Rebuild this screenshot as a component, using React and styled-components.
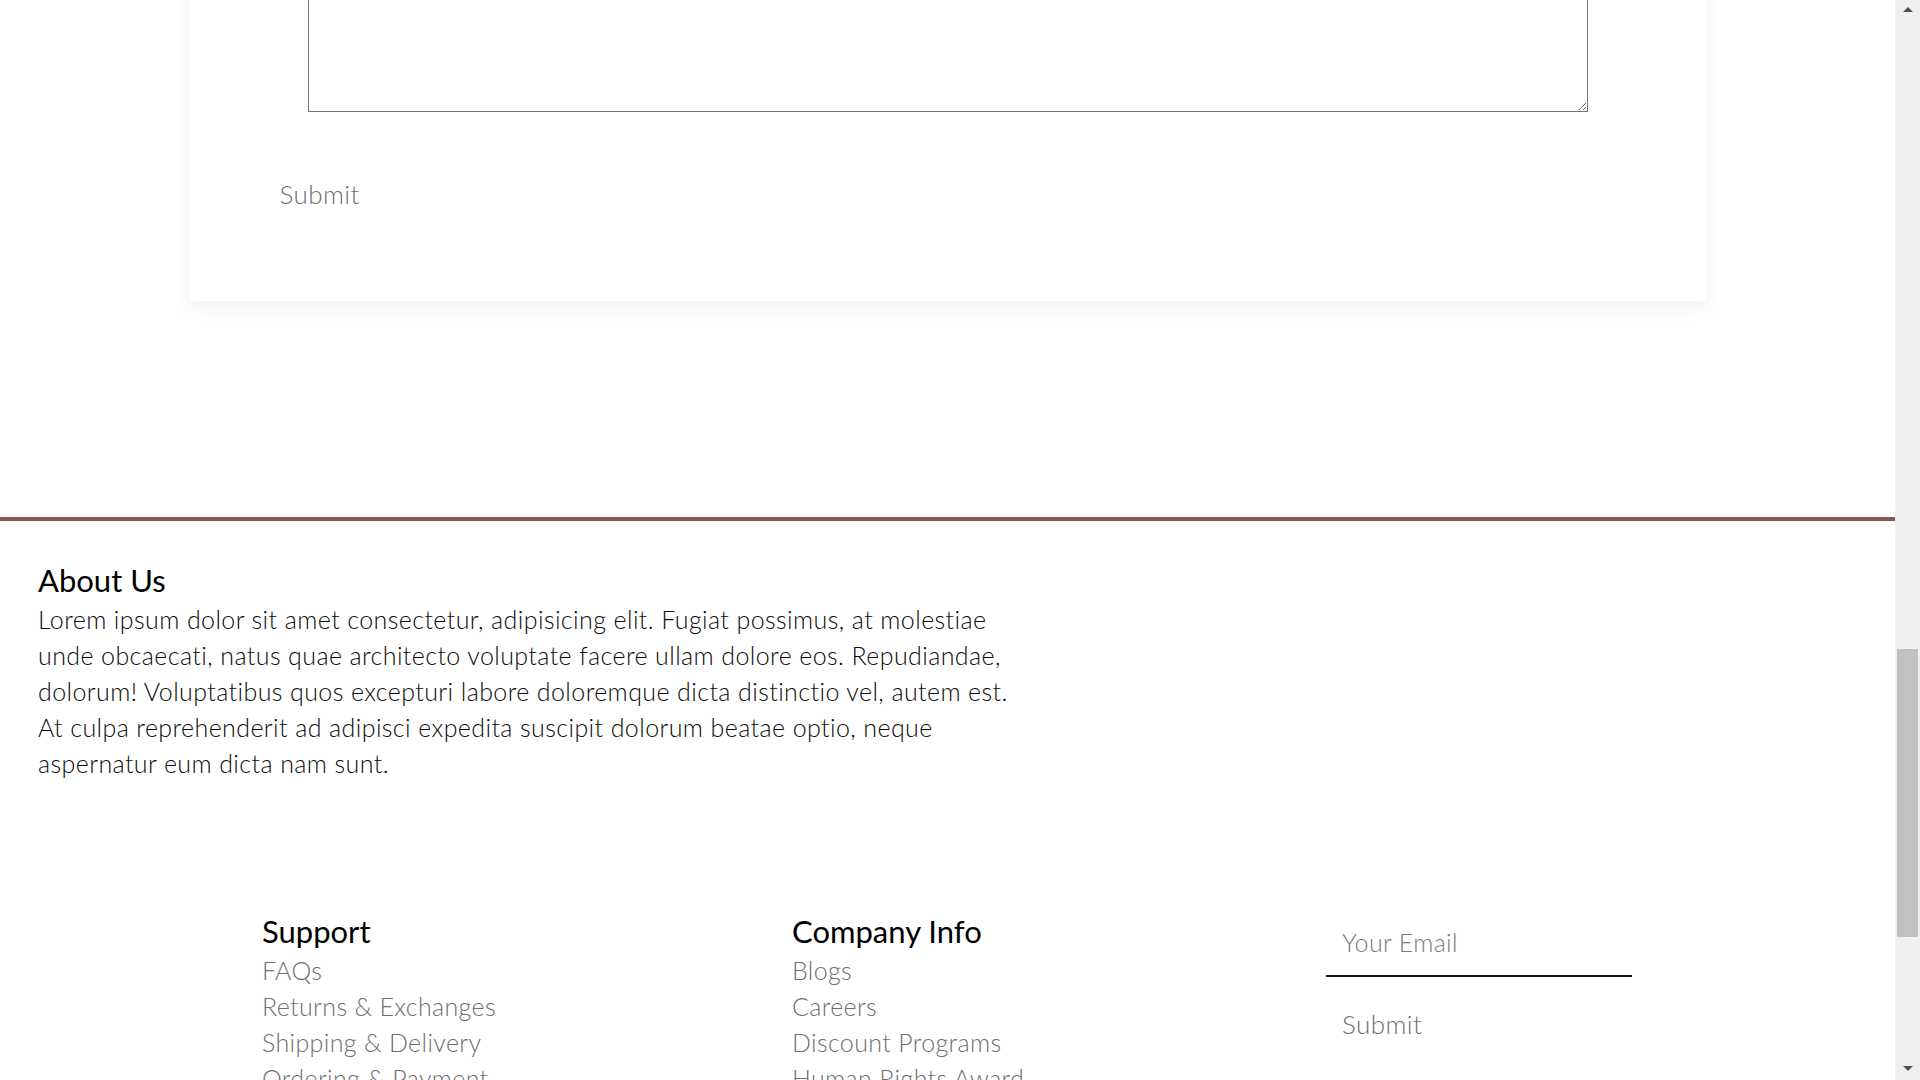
import React from "react";
import styled, { createGlobalStyle } from "styled-components";

const GlobalStyle = createGlobalStyle`
    html, body {
        margin: 0;
        height: 1080px;
        overflow: hidden;
        background: #fff;
        font-family: Lato, "Open Sans", sans-serif;
    }
    * {
        box-sizing: border-box;
    }
`

const StylePagina = styled.div `
    display: flex;
    height: 1080px;
`
const StyleConteudo = styled.div `
    flex: 1;
    display: flex;
    flex-direction: column;
    overflow: hidden;
`
const StyleCard = styled.div `
    width: 80%;
    margin: -187px auto 0;
    background: #fff;
    box-shadow: rgb(0 0 0 / 6%) 0px 6px 18px 0px;
    padding-bottom: 83px;
`
const StyleTextarea = styled.textarea `
    display: block;
    width: 1280px;
    height: 299px;
    margin: 0 auto;
    border: 1px solid #767676;
    border-radius: 0;
    font-family: inherit;
    font-size: 20px;
`
const StyleBotao = styled.button `
    display: block;
    background: transparent;
    border: none;
    padding: 8px 16px;
    margin: ${props => props.topo}px 0 0 ${props => props.esquerda}px;
    font-family: inherit;
    font-size: 26px;
    letter-spacing: 0.4px;
    font-weight: 300;
    color: #6f6f6f;
    cursor: pointer;
`
const StyleRodape = styled.footer `
    margin-top: 216px;
    border-top: 4px solid #8a5750;
    padding: 41px 0 0 38px;
`
const StyleTitulo = styled.h2 `
    margin: 0;
    font-size: 31px;
    line-height: 36px;
    font-weight: 400;
    color: #000;
`
const StyleTexto = styled.p `
    margin: 3px 0 0;
    width: 995px;
    font-size: 25px;
    letter-spacing: 0.4px;
    line-height: 36px;
    font-weight: 300;
    color: #0c0c0c;
`
const StyleColunas = styled.div `
    display: grid;
    grid-template-columns: 530px 534px 306px;
    margin-top: 132px;
    padding-left: 224px;
`
const StyleLista = styled.ul `
    list-style: none;
    margin: 3px 0 0;
    padding: 0;
    li {
        font-size: 25px;
        letter-spacing: 0.35px;
        line-height: 36px;
        font-weight: 300;
        color: #6f6f6f;
    }
`
const StyleEmail = styled.input `
    display: block;
    width: 100%;
    border: none;
    border-bottom: 2px solid #111;
    padding: 14px 16px 18px;
    font-family: inherit;
    font-size: 25px;
    letter-spacing: 0.35px;
    font-weight: 300;
    outline: none;
    &::placeholder {
        color: #7a7a7a;
    }
`
const StyleBarra = styled.aside `
    width: 25px;
    background: #f0f0f0;
    display: flex;
    flex-direction: column;
    align-items: center;
`
const StyleSeta = styled.div `
    width: 0;
    height: 0;
    margin: ${props => props.baixo ? "auto 0 9px" : "7px 0 0"};
    border-left: 5px solid transparent;
    border-right: 5px solid transparent;
    ${props => props.baixo ? "border-top: 5px solid #505050;" : "border-bottom: 5px solid #505050;"}
`
const StyleAlca = styled.div `
    width: 21px;
    height: 288px;
    margin-top: 637px;
    background: #c1c1c1;
`

const suporte = ["FAQs", "Returns & Exchanges", "Shipping & Delivery", "Ordering & Payment"]
const empresa = ["Blogs", "Careers", "Discount Programs", "Human Rights Award"]

const App = () => {
    return (
        <StylePagina>
            <GlobalStyle />
            <StyleConteudo>
                <StyleCard>
                    <StyleTextarea />
                    <StyleBotao topo={58} esquerda={74}>Submit</StyleBotao>
                </StyleCard>
                <StyleRodape>
                    <StyleTitulo>About Us</StyleTitulo>
                    <StyleTexto>
                        Lorem ipsum dolor sit amet consectetur, adipisicing elit. Fugiat possimus, at molestiae unde obcaecati, natus quae architecto voluptate facere ullam dolore eos. Repudiandae, dolorum! Voluptatibus quos excepturi labore doloremque dicta distinctio vel, autem est. At culpa reprehenderit ad adipisci expedita suscipit dolorum beatae optio, neque aspernatur eum dicta nam sunt.
                    </StyleTexto>
                    <StyleColunas>
                        <div>
                            <StyleTitulo>Support</StyleTitulo>
                            <StyleLista>
                                {suporte.map(item => <li key={item}>{item}</li>)}
                            </StyleLista>
                        </div>
                        <div>
                            <StyleTitulo>Company Info</StyleTitulo>
                            <StyleLista>
                                {empresa.map(item => <li key={item}>{item}</li>)}
                            </StyleLista>
                        </div>
                        <div>
                            <StyleEmail placeholder="Your Email" />
                            <StyleBotao topo={23} esquerda={0}>Submit</StyleBotao>
                        </div>
                    </StyleColunas>
                </StyleRodape>
            </StyleConteudo>
            <StyleBarra>
                <StyleSeta />
                <StyleAlca />
                <StyleSeta baixo />
            </StyleBarra>
        </StylePagina>
    )
}

export default App
